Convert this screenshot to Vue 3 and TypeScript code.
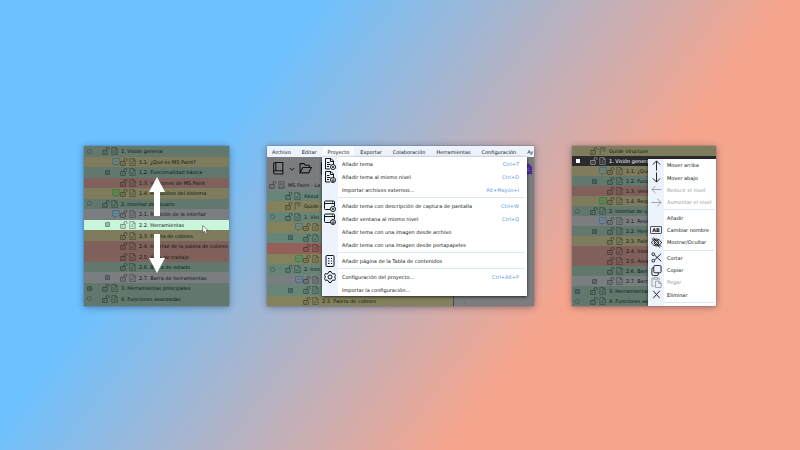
<script setup lang="ts">
type Tone = 'green' | 'yellow' | 'red' | 'grey' | 'picked' | 'selected' | 'plain'
type Toggle = 'open' | 'closed' | 'square'
type Doc = 'text' | 'edit' | 'flag' | 'book'

interface Topic {
  text: string
  level: 0 | 1 | 2
  tone: Tone
  toggle?: Toggle
  note?: 'blue' | 'green'
  doc?: Doc
}

interface Command {
  text: string
  icon?: string
  keys?: string
  disabled?: boolean
  divider?: boolean
}

const overview: Topic[] = [
  { text: '1. Visión general', level: 1, tone: 'green', toggle: 'open' },
  { text: '1.1. ¿Qué es MS Paint?', level: 2, tone: 'yellow', note: 'blue' },
  { text: '1.2. Funcionalidad básica', level: 2, tone: 'green', toggle: 'closed', doc: 'edit' },
  { text: '1.3. Versiones de MS Paint', level: 2, tone: 'red' },
  { text: '1.4. Requisitos del sistema', level: 2, tone: 'yellow', note: 'green' },
  { text: '2. Interfaz de usuario', level: 1, tone: 'green', toggle: 'open', doc: 'edit' },
  { text: '2.1. Revisión de la interfaz', level: 2, tone: 'grey', note: 'blue' },
]
const tools: Topic = { text: '2.2. Herramientas', level: 2, tone: 'green', toggle: 'closed' }
const palette: Topic = { text: '2.3. Paleta de colores', level: 2, tone: 'yellow', doc: 'edit' }
const rest: Topic[] = [
  palette,
  { text: '2.4. Interfaz de la paleta de colores', level: 2, tone: 'red', doc: 'edit' },
  { text: '2.5. Área de trabajo', level: 2, tone: 'red', doc: 'edit' },
  { text: '2.6. Barra de estado', level: 2, tone: 'green', doc: 'edit' },
  { text: '2.7. Barra de herramientas', level: 2, tone: 'grey', toggle: 'closed', doc: 'edit' },
  { text: '3. Herramientas principales', level: 1, tone: 'green', toggle: 'closed' },
  { text: '4. Funciones avanzadas', level: 1, tone: 'green', toggle: 'open' },
]
const guide: Topic = { text: 'Guide structure', level: 1, tone: 'yellow', doc: 'flag' }

/* The open menus lie over the right part of these rows, so their titles are cut to the free width. */
const clip = (topics: Topic[], from: number, lengths: Record<0 | 1 | 2, number>): Topic[] =>
  topics.map((t, i) => (i < from || i === topics.length - 1 && lengths[0] > 0 ? t : { ...t, text: t.text.slice(0, lengths[t.level]) }))

const trees: Record<'move' | 'project' | 'context', Topic[]> = {
  move: [...overview, { ...tools, tone: 'picked' }, ...rest],
  project: clip(
    [
      { text: 'MS Paint - Language', level: 0, tone: 'plain', doc: 'book' },
      { text: 'About', level: 1, tone: 'green', doc: 'edit' },
      guide,
      ...overview,
      tools,
      palette,
    ],
    0,
    { 0: 13, 1: 7, 2: 0 },
  ),
  context: clip(
    [
      guide,
      { text: '1. Visión general', level: 1, tone: 'selected', toggle: 'square' },
      ...overview.slice(1),
      tools,
      ...rest,
    ],
    2,
    { 0: 0, 1: 16, 2: 10 },
  ),
}

const menuBar = ['Archivo', 'Editar', 'Proyecto', 'Exportar', 'Colaboración', 'Herramientas', 'Configuración', 'Ay']

const projectMenu: Command[] = [
  { text: 'Añadir tema', icon: 'topic-add', keys: 'Ctrl+T' },
  { text: 'Añadir tema al mismo nivel', icon: 'topic-down', keys: 'Ctrl+D' },
  { text: 'Importar archivos externos...', keys: 'Alt+Mayús+I', divider: true },
  { text: 'Añadir tema con descripción de captura de pantalla', icon: 'window-add', keys: 'Ctrl+W' },
  { text: 'Añadir ventana al mismo nivel', icon: 'window-down', keys: 'Ctrl+Q' },
  { text: 'Añadir tema con una imagen desde archivo' },
  { text: 'Añadir tema con una imagen desde portapapeles', divider: true },
  { text: 'Añadir página de la Tabla de contenidos', icon: 'contents', divider: true },
  { text: 'Configuración del proyecto...', icon: 'gear', keys: 'Ctrl+Alt+P' },
  { text: 'Importar la configuración...' },
]

const contextMenu: Command[] = [
  { text: 'Mover arriba', icon: 'up' },
  { text: 'Mover abajo', icon: 'down' },
  { text: 'Reducir el nivel', icon: 'left', disabled: true },
  { text: 'Aumentar el nivel', icon: 'right', disabled: true, divider: true },
  { text: 'Añadir' },
  { text: 'Cambiar nombre', icon: 'rename' },
  { text: 'Mostrar/Ocultar', icon: 'eye', divider: true },
  { text: 'Cortar', icon: 'cut' },
  { text: 'Copiar', icon: 'copy' },
  { text: 'Pegar', icon: 'paste', disabled: true },
  { text: 'Eliminar', icon: 'delete', divider: true },
]

/* Stroked outlines on a 24-unit grid. */
const icons: Record<string, string> = {
  lock: 'M3 11h13v11H3zM13 11V6a4 4 0 0 1 8 0v3M9 15v3',
  text: 'M4 1h11l5 5v17H4zM14 1v6h6M9 12h6M9 17h6',
  edit: 'M4 1h11l5 5v17H4zM14 1v6h6M9 17l5-6M9 17h5',
  flag: 'M5 23V2h14v10h-6M9 7h6',
  book: 'M4 1h16v22H4zM4 18h16M8 7h8M8 11h8',
  note: 'M2 2h20v16H13l-5 4v-4H2zM7 10h10',
  'topic-add': 'M12 22H3V1h11l5 5v6M13 1v6h6M6 9h5M6 13h7M6 17h4M13 18a5 5 0 1 0 10 0a5 5 0 1 0-10 0M16 18h4M18 16v4',
  'topic-down': 'M12 22H3V1h11l5 5v6M13 1v6h6M6 9h5M6 13h7M6 17h4M13 18a5 5 0 1 0 10 0a5 5 0 1 0-10 0M18 15v6M16 19l2 2 2-2',
  'window-add': 'M12 19H3a2 2 0 0 1-2-2V4a2 2 0 0 1 2-2h16a2 2 0 0 1 2 2v8M1 7h20M16 4h2M13 18a5 5 0 1 0 10 0a5 5 0 1 0-10 0M16 18h4M18 16v4',
  'window-down': 'M12 19H3a2 2 0 0 1-2-2V4a2 2 0 0 1 2-2h16a2 2 0 0 1 2 2v8M1 7h20M16 4h2M13 18a5 5 0 1 0 10 0a5 5 0 1 0-10 0M18 15v6M16 19l2 2 2-2',
  contents: 'M4 3a2 2 0 0 1 2-2h12a2 2 0 0 1 2 2v18a2 2 0 0 1-2 2H6a2 2 0 0 1-2-2zM8 7h3M14 7h2M8 12h3M14 12h2M8 17h3M14 17h2',
  gear: 'M10 1h4l1 3 3 2 3-1 2 4-2 3 2 3-2 4-3-1-3 2-1 3h-4l-1-3-3-2-3 1-2-4 2-3-2-3 2-4 3 1 3-2zM8 12a4 4 0 1 0 8 0a4 4 0 1 0-8 0',
  up: 'M12 23V2M4 10l8-8 8 8',
  down: 'M12 1v21M4 14l8 8 8-8',
  left: 'M23 12H2M10 4l-8 8 8 8',
  right: 'M1 12h21M14 4l8 8-8 8',
  eye: 'M1 12c5-10 17-10 22 0c-5 10-17 10-22 0M7 12a5 5 0 1 0 10 0a5 5 0 1 0-10 0M5 1l17 20M2 3l17 20',
  cut: 'M2 5a3 3 0 1 0 6 0a3 3 0 1 0-6 0M2 19a3 3 0 1 0 6 0a3 3 0 1 0-6 0M8 7l14 13M8 17L22 4',
  copy: 'M9 1h10a3 3 0 0 1 3 3v10a3 3 0 0 1-3 3H9a3 3 0 0 1-3-3V4a3 3 0 0 1 3-3M6 6H4a2 2 0 0 0-2 2v12a3 3 0 0 0 3 3h8a3 3 0 0 0 3-3v-3',
  paste: 'M8 20H2V3h4M14 3h4v4M6 1h8v4H6zM10 9h8l4 4v10H10zM17 9v5h5',
  delete: 'M5 4l14 16M19 4L5 20',
  project: 'M6 1h14v21H6a3 3 0 0 1-3-3V4a3 3 0 0 1 3-3M3 19a3 3 0 0 1 3-3h14M7 1v15',
  folder: 'M2 20V3h7l3 3h7v4M2 20l5-10h16l-5 10z',
  sheet: 'M3 2h14l4 4v16H3zM8 8h8',
  chevron: 'M3 8l9 9 9-9',
}
</script>

<template>
  <main class="page">
    <section class="panel" aria-label="Mover temas">
      <ul class="tree tree-move">
        <li v-for="(topic, i) in trees.move" :key="i" class="row" :class="[topic.tone, 'level-' + topic.level]">
          <button class="toggle" :class="topic.toggle" type="button" aria-label="Desplegar"></button>
          <svg class="icon note" :class="topic.note" viewBox="0 0 24 24"><path v-if="topic.note" :d="icons.note" /></svg>
          <svg class="icon lock" viewBox="1 1 23 23"><path :d="icons.lock" /></svg>
          <svg class="icon doc" viewBox="2 0 20 24"><path :d="icons[topic.doc ?? 'text']" /></svg>
          <span class="label">{{ topic.text }}</span>
        </li>
      </ul>
      <svg class="arrow arrow-up" viewBox="0 0 16 39"><path d="M8 0l8 15h-5v24H5V15H0z" /></svg>
      <svg class="arrow arrow-down" viewBox="0 0 16 39"><path d="M8 39l8-15h-5V0H5v24H0z" /></svg>
      <svg class="cursor" viewBox="0 0 12 18"><path d="M1 1v13l3-3 3 6 2-1-2-6h4z" /></svg>
    </section>

    <section class="panel" aria-label="Menú Proyecto">
      <nav class="menubar">
        <button v-for="name in menuBar" :key="name" type="button" :class="{ active: name === 'Proyecto' }">{{ name }}</button>
      </nav>
      <div class="toolbar">
        <button type="button" aria-label="Proyecto"><svg class="icon tool" viewBox="0 0 24 24"><path :d="icons.project" /></svg></button>
        <button type="button" aria-label="Recientes"><svg class="icon chevron" viewBox="0 0 24 24"><path :d="icons.chevron" /></svg></button>
        <button type="button" aria-label="Abrir"><svg class="icon tool" viewBox="0 0 24 24"><path :d="icons.folder" /></svg></button>
        <button class="group" type="button" aria-label="Guardar"><svg class="icon tool" viewBox="0 0 24 24"><path :d="icons.sheet" /></svg></button>
        <button class="publish" type="button" aria-label="Publicar">
          <svg viewBox="0 0 12 14"><path d="M0 0h8l4 4v10H0z" fill="#4d2b97" /><path d="M3 9h6M3 6h5" stroke="#9a8bc0" /></svg>
        </button>
      </div>
      <div class="workspace">
        <ul class="tree tree-project">
          <li v-for="(topic, i) in trees.project" :key="i" class="row" :class="[topic.tone, 'level-' + topic.level]">
            <button v-if="topic.level" class="toggle" :class="topic.toggle" type="button" aria-label="Desplegar"></button>
            <svg v-if="topic.level" class="icon note" :class="topic.note" viewBox="0 0 24 24"><path v-if="topic.note" :d="icons.note" /></svg>
            <svg class="icon lock" viewBox="1 1 23 23"><path :d="icons.lock" /></svg>
            <svg class="icon doc" viewBox="2 0 20 24"><path :d="icons[topic.doc ?? 'text']" /></svg>
            <span class="label">{{ topic.text }}</span>
          </li>
        </ul>
        <div class="canvas"><span class="ruler">:</span></div>
      </div>
      <div class="menu project-menu" role="menu">
        <template v-for="item in projectMenu" :key="item.text">
          <button class="item" type="button" role="menuitem">
            <span class="glyph">
              <svg v-if="item.icon" class="icon" viewBox="0 0 24 24"><path :d="icons[item.icon]" /></svg>
            </span>
            <span class="label">{{ item.text }}</span>
            <span class="keys">{{ item.keys }}</span>
          </button>
          <div v-if="item.divider" class="divider" role="separator"></div>
        </template>
      </div>
    </section>

    <section class="panel" aria-label="Menú contextual">
      <ul class="tree tree-context">
        <li v-for="(topic, i) in trees.context" :key="i" class="row" :class="[topic.tone, 'level-' + topic.level]">
          <button class="toggle" :class="topic.toggle" type="button" aria-label="Desplegar"></button>
          <svg class="icon note" :class="topic.note" viewBox="0 0 24 24"><path v-if="topic.note" :d="icons.note" /></svg>
          <svg class="icon lock" viewBox="1 1 23 23"><path :d="icons.lock" /></svg>
          <svg class="icon doc" viewBox="2 0 20 24"><path :d="icons[topic.doc ?? 'text']" /></svg>
          <span class="label">{{ topic.text }}</span>
        </li>
      </ul>
      <div class="menu context-menu" role="menu">
        <template v-for="item in contextMenu" :key="item.text">
          <button class="item" type="button" role="menuitem" :disabled="item.disabled">
            <span class="glyph">
              <span v-if="item.icon === 'rename'" class="rename">AB</span>
              <svg v-else-if="item.icon" class="icon" viewBox="0 0 24 24"><path :d="icons[item.icon]" /></svg>
            </span>
            <span class="label">{{ item.text }}</span>
          </button>
          <div v-if="item.divider" class="divider" role="separator"></div>
        </template>
      </div>
    </section>
  </main>
</template>

<style>
body {
  margin: 0;
}
</style>

<style scoped>
.page {
  box-sizing: border-box;
  min-height: 100vh;
  padding: 2px 10.5% 0;
  display: grid;
  grid-template-columns: 145fr 267fr 144fr;
  gap: 38px;
  align-content: center;
  background: linear-gradient(127deg, #6dc1ff 28%, #f6a58d 69%);
  color: #101614;
  font-family: 'DejaVu Sans', 'Noto Sans', sans-serif;
  font-size: 5px;
  line-height: 8px;
}

.panel {
  position: relative;
  min-width: 0;
  min-height: 160px;
  overflow: hidden;
  background: #62786c;
  outline: 1px solid rgba(50, 60, 80, 0.12);
  box-shadow: 0 1px 7px rgba(20, 30, 50, 0.45);
}

button {
  margin: 0;
  padding: 0;
  border: 0;
  background: none;
  color: inherit;
  font: inherit;
  text-align: left;
}

.icon {
  flex: none;
  fill: none;
  stroke: currentColor;
  stroke-width: 2;
}

/* topic trees */
.tree {
  margin: 0;
  padding: 0;
  list-style: none;
  display: grid;
  grid-auto-rows: 1fr;
}

.tree-move {
  height: 158px;
}

.tree-project {
  height: 126px;
}

.tree-context {
  height: 160px;
}

.row {
  display: flex;
  align-items: center;
  min-width: 0;
  min-height: 0;
  overflow: hidden;
  white-space: nowrap;
  background: #7b7e80;
}

.level-0,
.level-1 {
  padding-left: 2px;
}

.level-2 {
  padding-left: 20px;
}

.tree-context .level-2 {
  padding-left: 19px;
}

.green {
  background: #62786c;
}

.yellow {
  background: #7e7c5c;
}

.red {
  background: #80605a;
}

.picked {
  background: #c9f5da;
}

.selected {
  background: #2b2b2d;
  color: #fff;
}

.toggle {
  flex: none;
  display: grid;
  place-items: center;
  width: 7px;
  height: 7px;
  margin-right: 1px;
}

.open::before,
.closed::before {
  content: '';
  box-sizing: border-box;
  width: 5px;
  height: 5px;
  border: 1px solid rgba(20, 30, 60, 0.28);
  border-radius: 2px;
}

.closed::before {
  border-radius: 1px;
  background: rgba(20, 30, 40, 0.25);
}

.square::before {
  content: '';
  width: 4px;
  height: 4px;
  background: #fff;
}

.note {
  width: 8px;
  height: 8px;
}

.note.blue {
  color: #24608c;
  fill: rgba(130, 170, 190, 0.2);
}

.note.green {
  color: #3d7a12;
  fill: rgba(130, 170, 90, 0.2);
}

.row .lock {
  width: 8px;
  height: 8px;
  margin-right: 1px;
  opacity: 0.65;
}

.row .doc {
  width: 7px;
  height: 8px;
  margin-right: 3px;
  opacity: 0.55;
}

/* drag hints */
.arrow {
  position: absolute;
  left: 65px;
  width: 16px;
  height: 39px;
  fill: #fff;
}

.arrow-up {
  top: 31px;
}

.arrow-down {
  top: 88px;
}

.cursor {
  position: absolute;
  left: 118px;
  top: 79px;
  width: 7px;
  height: 10px;
  fill: #fff;
  stroke: #333;
  stroke-width: 1;
}

/* project window */
.menubar {
  display: flex;
  gap: 1px;
  height: 11px;
  overflow: hidden;
  background: #edf3fd;
}

.menubar button {
  flex: none;
  padding: 0 5px;
}

.menubar .active {
  background: #f9fbff;
}

.toolbar {
  display: flex;
  align-items: center;
  gap: 4px;
  height: 23px;
  padding-left: 5px;
  background: #7b7c7e;
}

.toolbar button {
  display: flex;
}

.toolbar .group {
  margin-left: 4px;
}

.tool {
  width: 13px;
  height: 13px;
}

.chevron {
  width: 6px;
  height: 6px;
  stroke-width: 4;
}

.toolbar .publish {
  margin-left: auto;
  padding-right: 2px;
}

.publish svg {
  width: 9px;
  height: 12px;
}

.workspace {
  display: grid;
  grid-template-columns: 186fr 81fr;
}

.tree-project .green {
  background: #678577;
}

.tree-project .yellow {
  background: #84825c;
}

.tree-project .red {
  background: #93605a;
}

.canvas {
  display: flex;
  align-items: flex-end;
  padding-left: 10px;
  border-left: 1px solid #44464a;
  background: #7b7c7e;
}

/* menus */
.menu {
  position: absolute;
  display: flex;
  flex-direction: column;
  background: linear-gradient(to right, #edf3fd 16px, #fff 16px);
  box-shadow: 0 1px 3px rgba(0, 0, 0, 0.7);
}

.project-menu {
  left: 55px;
  top: 11px;
  width: 205px;
}

.context-menu {
  left: 76px;
  top: 13px;
  right: 0;
  bottom: 0;
  padding-bottom: 2px;
}

.item {
  display: flex;
  align-items: center;
  height: 13px;
  white-space: nowrap;
}

.context-menu .item {
  flex: 1;
  min-height: 0;
}

.item:disabled {
  color: #9a9a9c;
}

.glyph {
  flex: none;
  display: grid;
  place-items: center;
  width: 16px;
  margin-right: 4px;
}

.glyph .icon {
  width: 12px;
  height: 12px;
}

.context-menu .glyph .icon {
  width: 11px;
  height: 11px;
}

.rename {
  padding: 0 1px;
  border: 1px solid #555;
  border-radius: 1px;
  font-weight: 700;
  line-height: 6px;
}

.context-menu .glyph {
  margin-right: 3px;
}

.keys {
  margin-left: auto;
  padding-right: 8px;
  color: #5b97dc;
}

.divider {
  flex: none;
  height: 1px;
  margin: 1px 2px 1px 16px;
  background: #d9e6fb;
}
</style>
